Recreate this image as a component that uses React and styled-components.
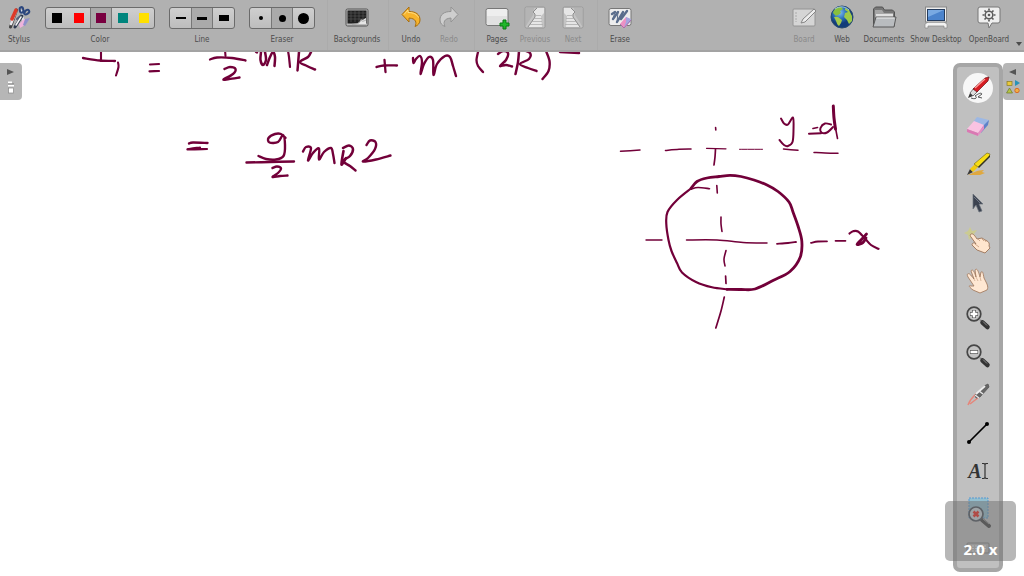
import React from "react";
import styled, { createGlobalStyle, css } from "styled-components";

const GlobalStyle = createGlobalStyle`
  *, *::before, *::after { box-sizing: border-box; }
  body { margin: 0; background: #fff; overflow: hidden; }
  button { font: inherit; color: inherit; border: 0; padding: 0; background: none; cursor: pointer; }
  svg { display: block; flex: none; }
`;

const Shell = styled.div`
  display: flex;
  flex-direction: column;
  height: 100vh;
  font-family: "DejaVu Sans Condensed", "DejaVu Sans", sans-serif;
`;

const Toolbar = styled.header`
  display: flex;
  align-items: stretch;
  flex: none;
  height: 52px;
  background: #b1b1b1;
  border-bottom: 2px solid #a3a3a3;
  color: #4c4c4c;
  font-size: 8px;
  line-height: 10px;
`;

const ToolButton = styled.button`
  display: flex;
  flex-direction: column;
  align-items: center;
  gap: 5px;
  flex: none;
  width: ${(p) => p.$width || 38}px;
  padding-top: 4px !important;
  white-space: nowrap;
  color: ${(p) => (p.disabled ? "#8a8a8a" : "inherit")} !important;
`;

const Group = styled.div`
  display: flex;
  flex-direction: column;
  align-items: center;
  gap: 6px;
  padding-top: 7px;
  margin-left: ${(p) => p.$gap}px;
`;

const Segments = styled.div`
  display: flex;
  height: 22px;
  border: 1px solid #6b6b6b;
  border-radius: 3px;
  overflow: hidden;
  background: linear-gradient(#cfcfcf, #bdbdbd);
`;

const Segment = styled.button`
  display: grid;
  place-items: center;
  width: ${(p) => p.$width}px;
  ${(p) =>
    p.$active &&
    css`
      background: #aaa !important;
      border-left: 1px solid #777 !important;
      border-right: 1px solid #777 !important;
    `}
`;

const Swatch = styled.span`
  width: 10px;
  height: 10px;
  background: ${(p) => p.$color};
`;

const LineMark = styled.span`
  width: 10px;
  height: ${(p) => p.$size}px;
  background: #000;
`;

const Dot = styled.span`
  width: ${(p) => p.$size}px;
  height: ${(p) => p.$size}px;
  border-radius: 50%;
  background: #000;
`;

const Separator = styled.div`
  width: 1px;
  margin: 0 ${(p) => p.$right || 3}px 0 ${(p) => p.$left || 5}px;
  background: #ababab;
`;

const Cluster = styled.nav`
  display: flex;
  margin-left: auto;
`;

const Board = styled.main`
  position: relative;
  flex: 1;
  min-height: 0;
  overflow: hidden;
  background: #fff;
`;

const Ink = styled.svg`
  width: 100%;
  height: auto;
  fill: none;
  stroke: #720039;
  stroke-linecap: round;
  stroke-linejoin: round;
`;

const Tab = styled.button`
  position: absolute;
  top: 11px;
  ${(p) => p.$side}: 0;
  width: ${(p) => (p.$side === "left" ? 22 : 21)}px;
  height: 37px;
  background: #b6b6b6 !important;
  border-radius: ${(p) => (p.$side === "left" ? "0 4px 4px 0" : "4px 0 0 4px")};
`;

const Palette = styled.aside`
  position: absolute;
  top: 11px;
  right: 21px;
  bottom: 4px;
  display: flex;
  flex-direction: column;
  justify-content: space-between;
  align-items: center;
  width: 50px;
  padding: 6px 0 5px;
  border: 4px solid #a6a6a6;
  border-radius: 7px;
  background: #c0c0c0;
`;

const PaletteButton = styled.button`
  display: grid;
  place-items: center;
  width: 30px;
  height: 30px;
  border-radius: 50%;
  ${(p) =>
    p.$active &&
    css`
      background: #f7f7f7 !important;
    `}
`;

const ZoomBadge = styled.output`
  position: absolute;
  right: 8px;
  bottom: 15px;
  display: flex;
  justify-content: center;
  align-items: flex-end;
  width: 71px;
  height: 60px;
  padding-bottom: 3px;
  border-radius: 5px;
  background: rgba(112, 112, 112, 0.5);
  color: #fff;
  font: bold 15px/18px "Open Sans", "Noto Sans", sans-serif;
`;

/* Catmull-Rom smoothing of a pen stroke */
function strokePath(pts) {
  let d = `M${pts[0][0]} ${pts[0][1]}`;
  for (let i = 0; i < pts.length - 1; i++) {
    const a = pts[i - 1] || pts[i];
    const b = pts[i];
    const c = pts[i + 1];
    const e = pts[i + 2] || c;
    d += ` C${b[0] + (c[0] - a[0]) / 6} ${b[1] + (c[1] - a[1]) / 6} ${c[0] - (e[0] - b[0]) / 6} ${c[1] - (e[1] - b[1]) / 6} ${c[0]} ${c[1]}`;
  }
  return d;
}

const equationStrokes = [
  { w: 2, p: [[83, 58], [100, 60.5], [115, 61]] },
  { w: 1.8, p: [[101, 50], [101, 61]] },
  { w: 1.8, p: [[118, 62.5], [118.5, 67], [116, 75.5]] },
  { w: 1.9, p: [[150, 64.5], [159, 64]] },
  { w: 1.9, p: [[149.5, 71.3], [159, 71]] },
  { w: 2, p: [[210, 59.5], [217, 57.5], [232, 58], [245.5, 60.5]] },
  { w: 1.8, p: [[225, 50], [225.5, 56]] },
  { w: 2.1, p: [[224.5, 69], [230, 67], [235.5, 69], [233, 74], [223.5, 79.5], [229, 79], [239.5, 77.5]] },
  { w: 2, p: [[256, 52], [257, 52.5]] },
  { w: 2.2, p: [[261, 52], [260.5, 60], [263, 65], [266, 60], [265, 52]] },
  { w: 2.2, p: [[267, 65], [270, 57], [273, 52], [275, 57], [274.5, 66]] },
  { w: 1.9, p: [[288, 51], [289, 57], [290, 67]] },
  { w: 2.2, p: [[299, 52], [297.5, 70.5]] },
  { w: 2.2, p: [[311, 52], [308, 57], [300, 62], [307, 66], [315, 69.5]] },
  { w: 2, p: [[376.5, 67], [384, 65.5], [397, 65.5]] },
  { w: 2, p: [[384.5, 60], [385.5, 72]] },
  { w: 2.1, p: [[413, 58], [413.5, 63], [416, 59], [420, 56], [422, 62], [420.5, 74], [424, 64], [429, 57], [433, 60], [433.5, 75], [437, 64], [445, 56], [450, 57], [453, 66], [456, 76]] },
  { w: 2, p: [[478.5, 50], [476.5, 60], [478, 66], [483, 72]] },
  { w: 2.1, p: [[498, 54], [503, 51], [508, 53], [506, 60], [500, 66], [506, 65], [512, 66.5]] },
  { w: 2.2, p: [[519, 51], [518, 62], [515.5, 74]] },
  { w: 2.1, p: [[523, 50], [530, 53], [529, 59], [520, 64], [528, 68], [536.5, 71]] },
  { w: 2.1, p: [[546, 51], [549.5, 61], [548.5, 71], [542.5, 79]] },
  { w: 2.2, p: [[560, 52], [579, 53]] },
  { w: 2.1, p: [[189, 143.5], [193, 142.5], [207.5, 143]] },
  { w: 1.9, p: [[200, 147.5], [187.5, 149.3], [207, 149]] },
  { w: 2.1, p: [[285.5, 138], [281, 134], [275, 134], [268.5, 138], [269.5, 142.5], [278, 142], [283, 135], [285, 145], [283.5, 156], [276, 159.5], [266, 159], [258.5, 156]] },
  { w: 2.1, p: [[246.5, 162.5], [270, 162], [294, 161.5]] },
  { w: 2.1, p: [[272.5, 168], [277, 166.5], [281, 168.5], [278, 173], [272.5, 177], [280, 176], [287.5, 175.5]] },
  { w: 2.1, p: [[303, 151.5], [306, 147], [311, 148], [308, 160.5], [313, 153], [319, 148.5], [319, 159.5], [324, 152], [331, 148], [333, 154], [334.5, 163]] },
  { w: 2.3, p: [[343.5, 151], [341.5, 164.5], [346, 158]] },
  { w: 2.2, p: [[343, 148], [349, 145.5], [353, 149], [350, 156], [343, 161], [350, 166], [355.5, 170.5]] },
  { w: 2.1, p: [[366.5, 145], [370, 140.5], [375.5, 142], [375, 149], [368, 158], [363, 161.5], [376, 159.5], [390.5, 155.5]] },
];

const diagramStrokes = [
  { w: 1.5, p: [[620.5, 151.3], [640, 150]] },
  { w: 1.6, p: [[665.5, 150.5], [679, 149.3], [691, 149]] },
  { w: 1.2, p: [[706.5, 148.3], [726, 148.8]] },
  { w: 1, p: [[739.5, 149.3], [762.5, 149.3]] },
  { w: 1.5, p: [[783.5, 149], [798, 150.3]] },
  { w: 1.5, p: [[814, 152.5], [825, 153], [838, 153.3]] },
  { w: 1.6, p: [[715.6, 127.5], [715.8, 130]] },
  { w: 1.7, p: [[715.5, 149], [715, 157], [714, 165]] },
  { w: 1.6, p: [[716.8, 185.5], [717.3, 193]] },
  { w: 2, p: [[781, 118.5], [784, 123.5], [788, 124.5], [793, 117.5], [793.5, 130], [792.5, 142], [788, 146], [784, 145], [779.5, 140]] },
  { w: 1.7, p: [[813, 128.5], [817.5, 127.5]] },
  { w: 2, p: [[809, 133.8], [821, 133.3]] },
  { w: 2, p: [[831, 124.5], [825, 123.5], [820.5, 128], [821.5, 132.5], [827, 132.5], [833, 127]] },
  { w: 3, p: [[833.3, 106], [834, 118], [835.5, 129]] },
  { w: 1.6, p: [[835.5, 128], [837.5, 138.5]] },
  { w: 2.8, p: [[691, 188.5], [697, 181.5], [707, 178], [719, 176.5], [730, 175.3], [741, 176.5], [754, 180], [767, 185], [778, 191.5], [789, 202], [793, 212], [798, 226], [801.8, 241], [800.3, 257], [790, 271.5], [773, 280.5], [755, 289], [741, 289.5], [727, 289.3]] },
  { w: 2.2, p: [[727, 289.3], [712, 287.3], [696, 282], [682, 272.5], [677, 263], [671.5, 251], [668.5, 240], [666.3, 224], [667.5, 212], [677, 200], [691, 188.5]] },
  { w: 1.6, p: [[691, 189], [698, 187.5], [709.5, 188.7]] },
  { w: 1.6, p: [[721, 217], [721, 224], [722, 231.5]] },
  { w: 1.6, p: [[726, 250.5], [724, 259], [725, 266]] },
  { w: 1.7, p: [[725.6, 276], [726, 283.5]] },
  { w: 1.7, p: [[724.3, 297], [721, 311], [715.8, 328]] },
  { w: 1.4, p: [[646, 240], [662, 240]] },
  { w: 1.5, p: [[686.5, 240], [717, 240], [743, 242.5], [767, 243]] },
  { w: 1.8, p: [[777, 243.8], [788, 243], [796, 242]] },
  { w: 1.8, p: [[811, 242.8], [818, 241.5], [827, 241.3]] },
  { w: 1.7, p: [[835.5, 240.8], [845.5, 240.8]] },
  { w: 2.2, p: [[849.5, 233.5], [853, 231.3], [858, 231.5], [865, 238.5], [871, 245], [878.5, 248.8]] },
  { w: 2.8, p: [[866.5, 234], [861, 240], [857, 244.5], [863, 242.5], [866, 238]] },
];

const ToolIcon = ({ children }) => (
  <svg width="28" height="26" viewBox="0 0 28 26" aria-hidden="true">{children}</svg>
);
const PalIcon = ({ children }) => (
  <svg width="30" height="30" viewBox="0 0 30 30" aria-hidden="true">{children}</svg>
);

const StylusIcon = () => (
  <ToolIcon>
    <g strokeLinecap="round" fill="none">
      <path d="M12 15 20 8" stroke="#54627c" strokeWidth="2" />
      <path d="m17 7 1 9" stroke="#e3e8ef" strokeWidth="2" />
      <ellipse cx="16.500" cy="6" rx="1.800" ry="2.800" stroke="#2c477e" strokeWidth="2" transform="rotate(-10 16 6)" />
      <ellipse cx="21.500" cy="8.500" rx="2.800" ry="1.800" stroke="#2c477e" strokeWidth="2" transform="rotate(-35 21 8)" />
      <path d="M5.500 23 11.500 6" stroke="#434343" strokeWidth="3" />
      <path d="m6 20 5-13" stroke="#e8e8ec" strokeWidth="2.500" />
      <path d="m7 15 4-9" stroke="#dd3a28" strokeWidth="3.500" />
      <path d="m10 23 7-11" stroke="#303b50" strokeWidth="3" />
      <path d="m11 21 5-8" stroke="#f4f4f4" strokeWidth="1.500" />
    </g>
    <path d="m14 20 5-5 5 0-4 6-5 3Z" fill="#eeb3dc" />
    <path d="m20 15 5-1-5 8-2-1Z" fill="#8d91ca" />
  </ToolIcon>
);

const BackgroundIcon = () => (
  <ToolIcon>
    <rect x="3" y="5" width="22" height="17" rx="1.500" fill="#b8b8b8" stroke="#555" />
    <rect x="4.500" y="6.500" width="19" height="13" fill="#202020" />
    <path d="M5 9h18M5 12h18M5 15h18M8 7v11M12 7v11M16 7v11M20 7v11" stroke="#5d5d5d" strokeWidth=".6" />
    <path d="M8 20c6 0 9-1 10-5 1 2 3 0 5-1v6Z" fill="#e6e6e6" />
    <path d="M9 20c6 0 8-1 9-4 1 2 3 1 5 0" fill="none" stroke="#8c8c8c" strokeWidth=".7" />
  </ToolIcon>
);

const ArrowIcon = ({ redo }) => (
  <ToolIcon>
    <path
      transform={redo ? "translate(28 0) scale(-1 1)" : undefined}
      d="M5 10.500 12 3v4.500c7 0 11 3 11 8.500 0 3-2 5.500-5 6.500 2-4 1-8-6-8.500v4Z"
      fill={redo ? "#cecece" : "#f7b42c"}
      stroke={redo ? "#939393" : "#a86e10"}
      strokeWidth="1"
      strokeLinejoin="round"
    />
    {!redo && <path d="m7 10.500 4-4.500v2.500c6 0 9 2 10.500 5" fill="none" stroke="#ffe08a" />}
  </ToolIcon>
);

const PagesIcon = () => (
  <ToolIcon>
    <rect x="3" y="4.500" width="22" height="17" rx="2" fill="#eee" stroke="#777" />
    <path d="M4 12h20v7a2 2 0 0 1-2 2H6a2 2 0 0 1-2-2Z" fill="#e1e1e1" />
    <path d="M20 16h3v3h3v3h-3v3h-3v-3h-3v-3h3Z" fill="#21b62a" stroke="#087a10" strokeLinejoin="round" />
  </ToolIcon>
);

const PageArrowIcon = ({ next }) => (
  <ToolIcon>
    <g transform={next ? "translate(28 0) scale(-1 1)" : undefined}>
      <rect x="4" y="3" width="20" height="21" rx="1.500" fill="#c4c4c4" stroke="#989898" />
      <path d="M5 4h8l-1 7-4 6-3 5Z" fill="#b4b4b4" />
      <path d="M7 23 14 13V10l-2-2 4-4h7v5l-3 3 1 11Z" fill="#e6e6e6" />
      <path d="m7 23 7-10V10l-2-2 4-4" fill="none" stroke="#8d8d8d" />
      <path d="M9 20.500h13M11 17.500h10M13 14.500h8M14 11.500h6" stroke="#adadad" strokeWidth=".8" />
    </g>
  </ToolIcon>
);

const EraseIcon = () => (
  <ToolIcon>
    <rect x="3" y="4.500" width="22" height="17" rx="2" fill="#ededed" stroke="#777" />
    <path d="m6 10 3-2M7 15l5-7M11 18l6-10M15 15l6-8" fill="none" stroke="#5a6d8c" strokeWidth="2.400" strokeLinecap="round" />
    <path d="m9 8-2 7M12 8l-1 10M17 8l-2 7" fill="none" stroke="#5a6d8c" strokeWidth="1" strokeLinecap="round" />
    <path d="m14 20 6-7 5 3-5 7-3 1Z" fill="#ec91c3" />
    <path d="m20 13 5 2-1 3-6 5 2-5Z" fill="#a5a5df" />
    <path d="m14 20 4 4 7-8" fill="none" stroke="#90609f" strokeWidth=".7" />
  </ToolIcon>
);

const BoardIcon = () => (
  <ToolIcon>
    <rect x="3" y="5" width="22" height="17" rx="1" fill="#d5d5d5" stroke="#949494" />
    <path d="M6 8v10" stroke="#aaa" strokeDasharray="2 1" />
    <path d="m11 19 2-4L24 5l2 2-11 11Z" fill="#ececec" stroke="#868686" />
  </ToolIcon>
);

const WebIcon = () => (
  <ToolIcon>
    <defs>
      <radialGradient id="globe" cx=".4" cy=".3">
        <stop offset="0" stopColor="#80bdf0" />
        <stop offset=".6" stopColor="#286cb7" />
        <stop offset="1" stopColor="#123c79" />
      </radialGradient>
    </defs>
    <circle cx="14" cy="13" r="11" fill="url(#globe)" stroke="#284b70" />
    <path d="M5 9c1-4 4-6 8-6l2 2-3 2 1 2-3 2-3 1 2 1Z" fill="#88bf3d" />
    <path d="m6 13 4 0 4 3-1 3-2 3c-2-1-2-3-3-5Z" fill="#a3c94b" />
    <path d="m17 4 4 2 3 6v5l-3 3-2-4-3-3 1-4 3-1-3-2Z" fill="#9dc94a" />
    <path d="M7 5c4-3 10-3 14 1" fill="none" stroke="#c8e8ff" opacity=".7" />
  </ToolIcon>
);

const DocumentsIcon = () => (
  <ToolIcon>
    <path d="M3.500 22V5l2-2h7l2 3h8l2 2v14Z" fill="#777" stroke="#535353" />
    <path d="M5 6h7l2 3h9v5H5Z" fill="#a6a6a6" />
    <path d="M6 10h17v6H6Z" fill="#e0e0e0" />
    <path d="M3 23 6 13h20l-2 10Z" fill="#b9bcbf" stroke="#595959" strokeLinejoin="round" />
    <path d="M6.500 14h18" stroke="#ededed" />
  </ToolIcon>
);

const DesktopIcon = () => (
  <ToolIcon>
    <path d="M3 24v-4l3-2h16l3 2v4h-3v-2H6v2Z" fill="#f2f2f2" stroke="#888" strokeWidth=".7" />
    <rect x="3.500" y="3" width="21" height="15" fill="#eee" stroke="#888" />
    <rect x="5.500" y="5.500" width="17" height="11" fill="#4b83cc" stroke="#233b5d" />
    <path d="M6 6h16L6 13Z" fill="#79a9e2" />
  </ToolIcon>
);

const OpenBoardIcon = () => (
  <ToolIcon>
    <path d="M5 3h18a2 2 0 0 1 2 2v12a2 2 0 0 1-2 2h-6l-3 5-1-5H5a2 2 0 0 1-2-2V5a2 2 0 0 1 2-2Z" fill="#efefef" stroke="#777" />
    <circle cx="14" cy="11" r="3.800" fill="#efefef" stroke="#5c5c5c" strokeWidth="1.500" />
    <circle cx="14" cy="11" r="1.300" fill="#5c5c5c" />
    <path d="M14 4.500v2M14 15.500v2M7.500 11h2M18.500 11h2M9.500 6.500l1.500 1.500M17 14l1.500 1.500M18.500 6.500 17 8M11 14l-1.500 1.500" stroke="#5c5c5c" strokeWidth="1.700" />
  </ToolIcon>
);

const PenIcon = () => (
  <PalIcon>
    <path d="M8 25c5 2 7-1 4-2 3-2 6-4 7-2l-4 3 4 1" fill="none" stroke="#555" />
    <path d="m5 25 2-5 3 3Z" fill="#3a3a3a" />
    <path d="m7 20 4-5 4 3-5 5Z" fill="#ddd" stroke="#444" strokeWidth=".7" />
    <path d="M10 16 22 5l4-1-1 4-11 11Z" fill="#d51b22" stroke="#671217" strokeWidth=".7" />
    <path d="m12 15 10-9" stroke="#ff9b97" strokeWidth="1.300" />
  </PalIcon>
);

const EraserIcon = () => (
  <PalIcon>
    <path d="m14 6 12 3-4 8-7-3-5-3Z" fill="#9db8e4" />
    <path d="m26 9-1 5-7 8 1-6Z" fill="#5e82c8" />
    <path d="m4 18 7-8 10 4-6 8Z" fill="#fac3e2" />
    <path d="m4 18 11 4v3L4 21Z" fill="#da78b3" />
    <path d="m15 22 6-8v4l-6 7Z" fill="#e58dc3" />
  </PalIcon>
);

const MarkerIcon = () => (
  <PalIcon>
    <path d="M5 25c5-2 9-5 16-5l-2 2 3 1-5 2Z" fill="#dfa83f" />
    <path d="m4 25 3-6 3 3Z" fill="#3a3937" />
    <path d="m7 19 5-5 3 3-5 5Z" fill="#f1cb0c" />
    <path d="M11 14 24 3l3 1-1 3-11 10Z" fill="#f7dd13" stroke="#6d6112" strokeWidth=".6" />
    <path d="m15 17 12-12v2L16 18Z" fill="#343421" />
  </PalIcon>
);

const SelectIcon = () => (
  <PalIcon>
    <path d="M10 6v15l3-4 3 7 3-1-3-7h4Z" fill="#3c4350" stroke="#6b727d" strokeWidth=".7" />
    <path d="m11 9 6 6" stroke="#6f7685" />
  </PalIcon>
);

const PointHandIcon = () => (
  <PalIcon>
    <path d="m7 1 2 4 5-1-3 4 2 3-4-1-3 4-1-5-4-2 4-2Z" fill="#d0d07e" opacity=".7" />
    <path d="M8 8c2-1 4 2 6 5l5-1 3 2c3 1 5 3 4 6l1 2-5 5-8-3-5-5c0-2 2-3 4-1l-5-7c-1-1-1-2 0-3Z" fill="#ffe5cd" stroke="#9b7459" strokeWidth=".9" />
    <path d="m15 13 2 2m2-2 2 2m1-1 1 2m-11 2 4 3" stroke="#bc9273" strokeWidth=".7" fill="none" />
  </PalIcon>
);

const HandIcon = () => (
  <PalIcon>
    <g transform="translate(1 0)">
      <path d="M4 9c1-1 2 0 6 5L7 6c1-2 3-1 5 6l-1-7c2-2 3 0 5 7l1-5c2-1 2 1 3 6l3 6c1 3 1 4 0 6l-7 3-7-3c-4-3-5-5-2-4l3 0-6-9c-1-2-1-3 0-3Z" fill="#ffe8d3" stroke="#a57e63" strokeWidth=".9" />
      <path d="m10 14 1 2m1-4 2 4m2-4 1 4" stroke="#c9a184" strokeWidth=".7" />
    </g>
  </PalIcon>
);

const MagnifierIcon = ({ plus }) => (
  <PalIcon>
    <path d="m17 17 3 2" stroke="#888" strokeWidth="2" />
    <path d="m19.500 19.500 5 4.500" stroke="#343434" strokeWidth="4.500" strokeLinecap="round" />
    <path d="m20 18.500 4 4" stroke="#888" strokeWidth="1" />
    <circle cx="11" cy="11" r="6.800" fill="#c2c2c2" stroke="#464646" strokeWidth="1.700" />
    <path d={plus ? "M7 11h8M11 7v8" : "M7 11h8"} stroke="#555" strokeWidth="4" />
    <path d={plus ? "M7.500 11h7M11 7.500v7" : "M7.500 11h7"} stroke="#fff" strokeWidth="2.500" />
  </PalIcon>
);

const LaserIcon = () => (
  <PalIcon>
    <path d="M5 25c2-6 6-9 8-11l3 3-9 7" fill="none" stroke="#e5867a" strokeWidth="1.500" />
    <path d="m12 15 9-9 4-2 1 3-9 10-4 1Z" fill="#666" stroke="#555" strokeWidth=".8" />
    <path d="m13 14 9-8" stroke="#eee" strokeWidth="1.700" />
    <path d="m12 15 4 3M16 11l4 3" stroke="#e6e6e6" strokeWidth="1.500" />
  </PalIcon>
);

const LineIcon = () => (
  <PalIcon>
    <path d="M6 24 24 6" stroke="#000" strokeWidth="1.700" />
    <circle cx="6" cy="24" r="2" />
    <circle cx="24" cy="6" r="2" />
  </PalIcon>
);

const TextToolLabel = styled.span`
  display: flex;
  align-items: center;
  color: #333;
  font: italic bold 20px/20px "Liberation Serif", serif;
`;

const TextIcon = () => (
  <TextToolLabel>
    A
    <svg width="6" height="18" viewBox="0 0 6 18" aria-hidden="true">
      <path d="M0 1.500h2l1 1 1-1h2M3 2v14M0 16.500h2l1-1 1 1h2" fill="none" stroke="#333" strokeWidth="1.200" />
    </svg>
  </TextToolLabel>
);

const CaptureIcon = () => (
  <svg width="30" height="34" viewBox="0 -3 30 34" aria-hidden="true">
    <rect x="6" y="0" width="19" height="20" fill="#94bfcf" stroke="#5499d2" strokeDasharray="2 1" />
    <path d="m19 22 7 6" stroke="#444" strokeWidth="4" strokeLinecap="round" />
    <path d="m20 21 6 5" stroke="#999" />
    <circle cx="13" cy="16" r="7" fill="#ccd6dc" stroke="#4c535d" strokeWidth="1.700" />
    <path d="m10.500 13.500 5 5m0-5-5 5" stroke="#f0281e" strokeWidth="2.500" />
  </svg>
);

const KeyboardIcon = () => (
  <PalIcon>
    <rect x="4" y="10" width="22" height="10" rx="1" fill="#bdbdbd" stroke="#848484" />
    <path d="M6 13h18M6 15.500h18M9 18h12" stroke="#eee" strokeDasharray="2 1" />
  </PalIcon>
);

const paletteTools = [
  ["Pen", <PenIcon />],
  ["Eraser", <EraserIcon />],
  ["Marker", <MarkerIcon />],
  ["Select", <SelectIcon />],
  ["Play", <PointHandIcon />],
  ["Hand", <HandIcon />],
  ["Zoom in", <MagnifierIcon plus />],
  ["Zoom out", <MagnifierIcon />],
  ["Laser pointer", <LaserIcon />],
  ["Draw line", <LineIcon />],
  ["Write text", <TextIcon />],
  ["Capture", <CaptureIcon />],
  ["Virtual keyboard", <KeyboardIcon />],
];

const Tool = ({ icon, label, ...rest }) => (
  <ToolButton {...rest}>
    {icon}
    {label}
  </ToolButton>
);

export default function App() {
  return (
    <Shell>
      <GlobalStyle />
      <Toolbar>
        <Tool icon={<StylusIcon />} label="Stylus" />
        <Group $gap={7}>
          <Segments>
            {["#000000", "#ff0000", "#790040", "#00857d", "#ffe000"].map((c, i) => (
              <Segment key={c} $width={i === 4 ? 20 : 22} $active={i === 2} aria-label={`Color ${i + 1}`}>
                <Swatch $color={c} />
              </Segment>
            ))}
          </Segments>
          Color
        </Group>
        <Group $gap={14}>
          <Segments>
            {[2, 3, 6].map((s, i) => (
              <Segment key={s} $width={i === 1 ? 22 : 21} $active={i === 1} aria-label={`Line ${i + 1}`}>
                <LineMark $size={s} />
              </Segment>
            ))}
          </Segments>
          Line
        </Group>
        <Group $gap={14}>
          <Segments>
            {[4, 7, 11].map((s, i) => (
              <Segment key={s} $width={i === 1 ? 22 : 21} $active={i === 1} aria-label={`Eraser ${i + 1}`}>
                <Dot $size={s} />
              </Segment>
            ))}
          </Segments>
          Eraser
        </Group>
        <Separator $left={12} $right={1} />
        <Tool icon={<BackgroundIcon />} label="Backgrounds" $width={56} />
        <Separator $left={3} />
        <Tool icon={<ArrowIcon />} label="Undo" />
        <Tool icon={<ArrowIcon redo />} label="Redo" disabled />
        <Separator $left={6} />
        <Tool icon={<PagesIcon />} label="Pages" />
        <Tool icon={<PageArrowIcon />} label="Previous" disabled />
        <Tool icon={<PageArrowIcon next />} label="Next" disabled />
        <Separator />
        <Tool icon={<EraseIcon />} label="Erase" />
        <Cluster>
          <Tool icon={<BoardIcon />} label="Board" disabled />
          <Tool icon={<WebIcon />} label="Web" />
          <Tool icon={<DocumentsIcon />} label="Documents" $width={46} />
          <Tool icon={<DesktopIcon />} label="Show Desktop" $width={58} />
          <Tool icon={<OpenBoardIcon />} label="OpenBoard" $width={48} />
          <ToolButton $width={11} aria-label="More">
            <svg width="6" height="42" viewBox="0 0 6 42" aria-hidden="true">
              <path d="M0 38h6l-3 4Z" fill="#4c4c4c" />
            </svg>
          </ToolButton>
        </Cluster>
      </Toolbar>
      <Board>
        <Ink viewBox="0 52 1024 524" role="img" aria-label="Handwritten moment of inertia working with a circle and axes">
          {equationStrokes.map((s, i) => (
            <path key={i} d={strokePath(s.p)} strokeWidth={s.w + 0.3} />
          ))}
          {diagramStrokes.map((s, i) => (
            <path key={i} d={strokePath(s.p)} strokeWidth={s.w} />
          ))}
        </Ink>
        <Tab $side="left" aria-label="Open pages panel">
          <svg width="22" height="37" viewBox="0 0 22 37" aria-hidden="true">
            <path d="m7 6 7 3-7 3Z" fill="#555" />
            <path d="M8 19.500h4M8 22.500h6" stroke="#fff" strokeWidth="2" />
            <path d="M8 21h6" stroke="#777" />
            <rect x="8.500" y="25" width="5" height="5" fill="#fff" stroke="#888" strokeWidth=".7" />
          </svg>
        </Tab>
        <Palette>
          {paletteTools.map(([label, icon], i) => (
            <PaletteButton key={label} $active={i === 0} aria-label={label}>
              {icon}
            </PaletteButton>
          ))}
        </Palette>
        <Tab $side="right" aria-label="Open library panel">
          <svg width="21" height="37" viewBox="0 0 21 37" aria-hidden="true">
            <path d="m13 6-7 3 7 3Z" fill="#555" />
            <rect x="4" y="18.500" width="5" height="4" fill="#e9c93b" stroke="#8b7a23" strokeWidth=".7" />
            <path d="m12 17 5 3-5 3Z" fill="#2993b8" />
            <path d="m6.500 25 3 5h-6Z" fill="#b6c544" stroke="#6c7a26" strokeWidth=".7" />
            <circle cx="14" cy="27.500" r="2.200" fill="#efb044" stroke="#d86b26" />
          </svg>
        </Tab>
        <ZoomBadge>2.0 x</ZoomBadge>
      </Board>
    </Shell>
  );
}
